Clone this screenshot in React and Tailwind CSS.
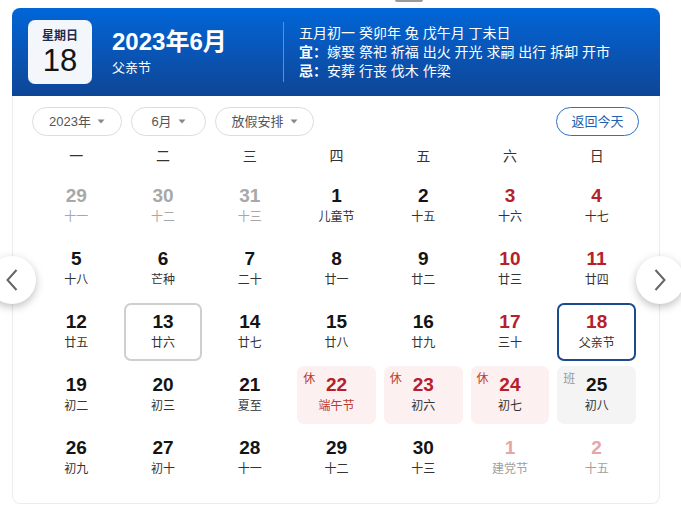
import React from "react";

const FONT = { fontFamily: '"Liberation Sans", "Noto Sans CJK SC", sans-serif' };

const rows = [
  [
    { d: 29, l: "十一", t: "prev" },
    { d: 30, l: "十二", t: "prev" },
    { d: 31, l: "十三", t: "prev" },
    { d: 1, l: "儿童节" },
    { d: 2, l: "十五" },
    { d: 3, l: "十六", red: true },
    { d: 4, l: "十七", red: true },
  ],
  [
    { d: 5, l: "十八" },
    { d: 6, l: "芒种" },
    { d: 7, l: "二十" },
    { d: 8, l: "廿一" },
    { d: 9, l: "廿二" },
    { d: 10, l: "廿三", red: true },
    { d: 11, l: "廿四", red: true },
  ],
  [
    { d: 12, l: "廿五" },
    { d: 13, l: "廿六", sel: true },
    { d: 14, l: "廿七" },
    { d: 15, l: "廿八" },
    { d: 16, l: "廿九" },
    { d: 17, l: "三十", red: true },
    { d: 18, l: "父亲节", red: true, today: true },
  ],
  [
    { d: 19, l: "初二" },
    { d: 20, l: "初三" },
    { d: 21, l: "夏至" },
    { d: 22, l: "端午节", red: true, hol: true, lred: true },
    { d: 23, l: "初六", red: true, hol: true },
    { d: 24, l: "初七", red: true, hol: true },
    { d: 25, l: "初八", work: true },
  ],
  [
    { d: 26, l: "初九" },
    { d: 27, l: "初十" },
    { d: 28, l: "十一" },
    { d: 29, l: "十二" },
    { d: 30, l: "十三" },
    { d: 1, l: "建党节", t: "next" },
    { d: 2, l: "十五", t: "next" },
  ],
];

function Caret() {
  return (
    <svg width="8" height="5" viewBox="0 0 8 5" className="ml-[6px]">
      <path d="M0.5 0.5 L7.5 0.5 L4 4.5 Z" fill="#888" />
    </svg>
  );
}

function Cell({ c }) {
  let box = "border-2 border-transparent";
  if (c.sel) box = "border-2 border-[#cfcfcf]";
  if (c.today) box = "border-2 border-[#1b4a8e]";
  if (c.hol) box = "border-2 border-transparent bg-[#fcf0f0]";
  if (c.work) box = "border-2 border-transparent bg-[#f4f4f4]";

  let numCls = "text-[#141414]";
  let lunCls = "text-[#333]";
  if (c.red) numCls = "text-[#b5202a]";
  if (c.lred) lunCls = "text-[#c0392b]";
  if (c.t === "prev") {
    numCls = "text-[#a8a8a8]";
    lunCls = "text-[#a8a8a8]";
  }
  if (c.t === "next") {
    numCls = "text-[#e6a6a6]";
    lunCls = "text-[#a0a0a0]";
  }

  return (
    <div className="px-[4px]">
      <div className={`relative h-[58px] rounded-[7px] flex flex-col items-center ${box}`}>
        {c.hol && (
          <span className="absolute left-[4px] top-[4px] text-[12px] leading-[14px] text-[#c0392b]">休</span>
        )}
        {c.work && (
          <span className="absolute left-[4px] top-[4px] text-[12px] leading-[14px] text-[#999]">班</span>
        )}
        <div className={`mt-[6px] text-[19px] leading-[22px] font-bold ${numCls}`}>{c.d}</div>
        <div className={`mt-[2px] text-[12px] leading-[16px] ${lunCls}`}>{c.l}</div>
      </div>
    </div>
  );
}

function Arrow({ dir }) {
  return (
    <div className="w-[48px] h-[48px] rounded-full bg-white shadow-[0_3px_8px_rgba(0,0,0,0.25)] flex items-center justify-center">
      <svg width="12" height="22" viewBox="0 0 12 22">
        {dir === "left" ? (
          <polyline points="10.5,1 1.5,11 10.5,21" fill="none" stroke="#666" strokeWidth="2" />
        ) : (
          <polyline points="1.5,1 10.5,11 1.5,21" fill="none" stroke="#666" strokeWidth="2" />
        )}
      </svg>
    </div>
  );
}

export default function App() {
  return (
    <div className="relative w-[681px] h-[512px] bg-white overflow-hidden" style={FONT}>
      <div className="h-[8px] flex">
        <div className="ml-[395px] w-[28px] h-[2px] rounded-b-full bg-[#9a9a9a]" />
      </div>
      <div className="mx-[12px] w-[648px]">
        {/* Header */}
        <div className="h-[88px] rounded-t-[8px] bg-gradient-to-b from-[#0066d8] to-[#0d4596] flex items-center pl-[16px] text-white">
          <div className="w-[64px] h-[64px] rounded-[7px] bg-[#f3f6fb] flex flex-col items-center">
            <div className="mt-[9px] text-[12px] leading-[14px] font-bold text-[#1c2b4f]">星期日</div>
            <div className="mt-[1px] text-[31px] leading-[34px] text-[#141414]">18</div>
          </div>
          <div className="w-[191px] h-[64px] pl-[20px]">
            <div className="pt-[7px] text-[24px] leading-[30px] font-bold">2023年6月</div>
            <div className="mt-[2px] text-[13px] leading-[18px]">父亲节</div>
          </div>
          <div className="w-px h-[60px] bg-[#5f8fd0]" />
          <div className="pl-[15px] text-[14px] leading-[19px]">
            <div>五月初一 癸卯年 兔 戊午月 丁未日</div>
            <div><span className="font-bold">宜：</span>嫁娶 祭祀 祈福 出火 开光 求嗣 出行 拆卸 开市</div>
            <div><span className="font-bold">忌：</span>安葬 行丧 伐木 作梁</div>
          </div>
        </div>
        {/* Body */}
        <div className="h-[408px] border border-t-0 border-[#ececec] rounded-b-[8px]">
          <div className="flex items-center pt-[11px] pl-[19px] pr-[20px]">
            <div className="w-[90px] h-[29px] rounded-full border border-[#dcdcdc] flex items-center justify-center text-[13px] text-[#555]">
              2023年<Caret />
            </div>
            <div className="ml-[9px] w-[75px] h-[29px] rounded-full border border-[#dcdcdc] flex items-center justify-center text-[13px] text-[#555]">
              6月<Caret />
            </div>
            <div className="ml-[9px] w-[99px] h-[29px] rounded-full border border-[#dcdcdc] flex items-center justify-center text-[13px] text-[#555]">
              放假安排<Caret />
            </div>
            <div className="ml-auto w-[83px] h-[29px] rounded-full border border-[#2a72c4] flex items-center justify-center text-[13px] text-[#2260b0]">
              返回今天
            </div>
          </div>
          <div className="pl-[20px] pr-[19px]">
            <div className="grid grid-cols-7 mt-[10px] h-[20px] items-center text-[14px] text-[#333] text-center">
              {["一", "二", "三", "四", "五", "六", "日"].map((w) => (
                <div key={w}>{w}</div>
              ))}
            </div>
            <div className="grid grid-cols-7 gap-y-[5px] mt-[11px]">
              {rows.flat().map((c, i) => (
                <Cell key={i} c={c} />
              ))}
            </div>
          </div>
        </div>
      </div>
      <div className="absolute left-[-12px] top-[256px]">
        <Arrow dir="left" />
      </div>
      <div className="absolute left-[636px] top-[256px]">
        <Arrow dir="right" />
      </div>
    </div>
  );
}
